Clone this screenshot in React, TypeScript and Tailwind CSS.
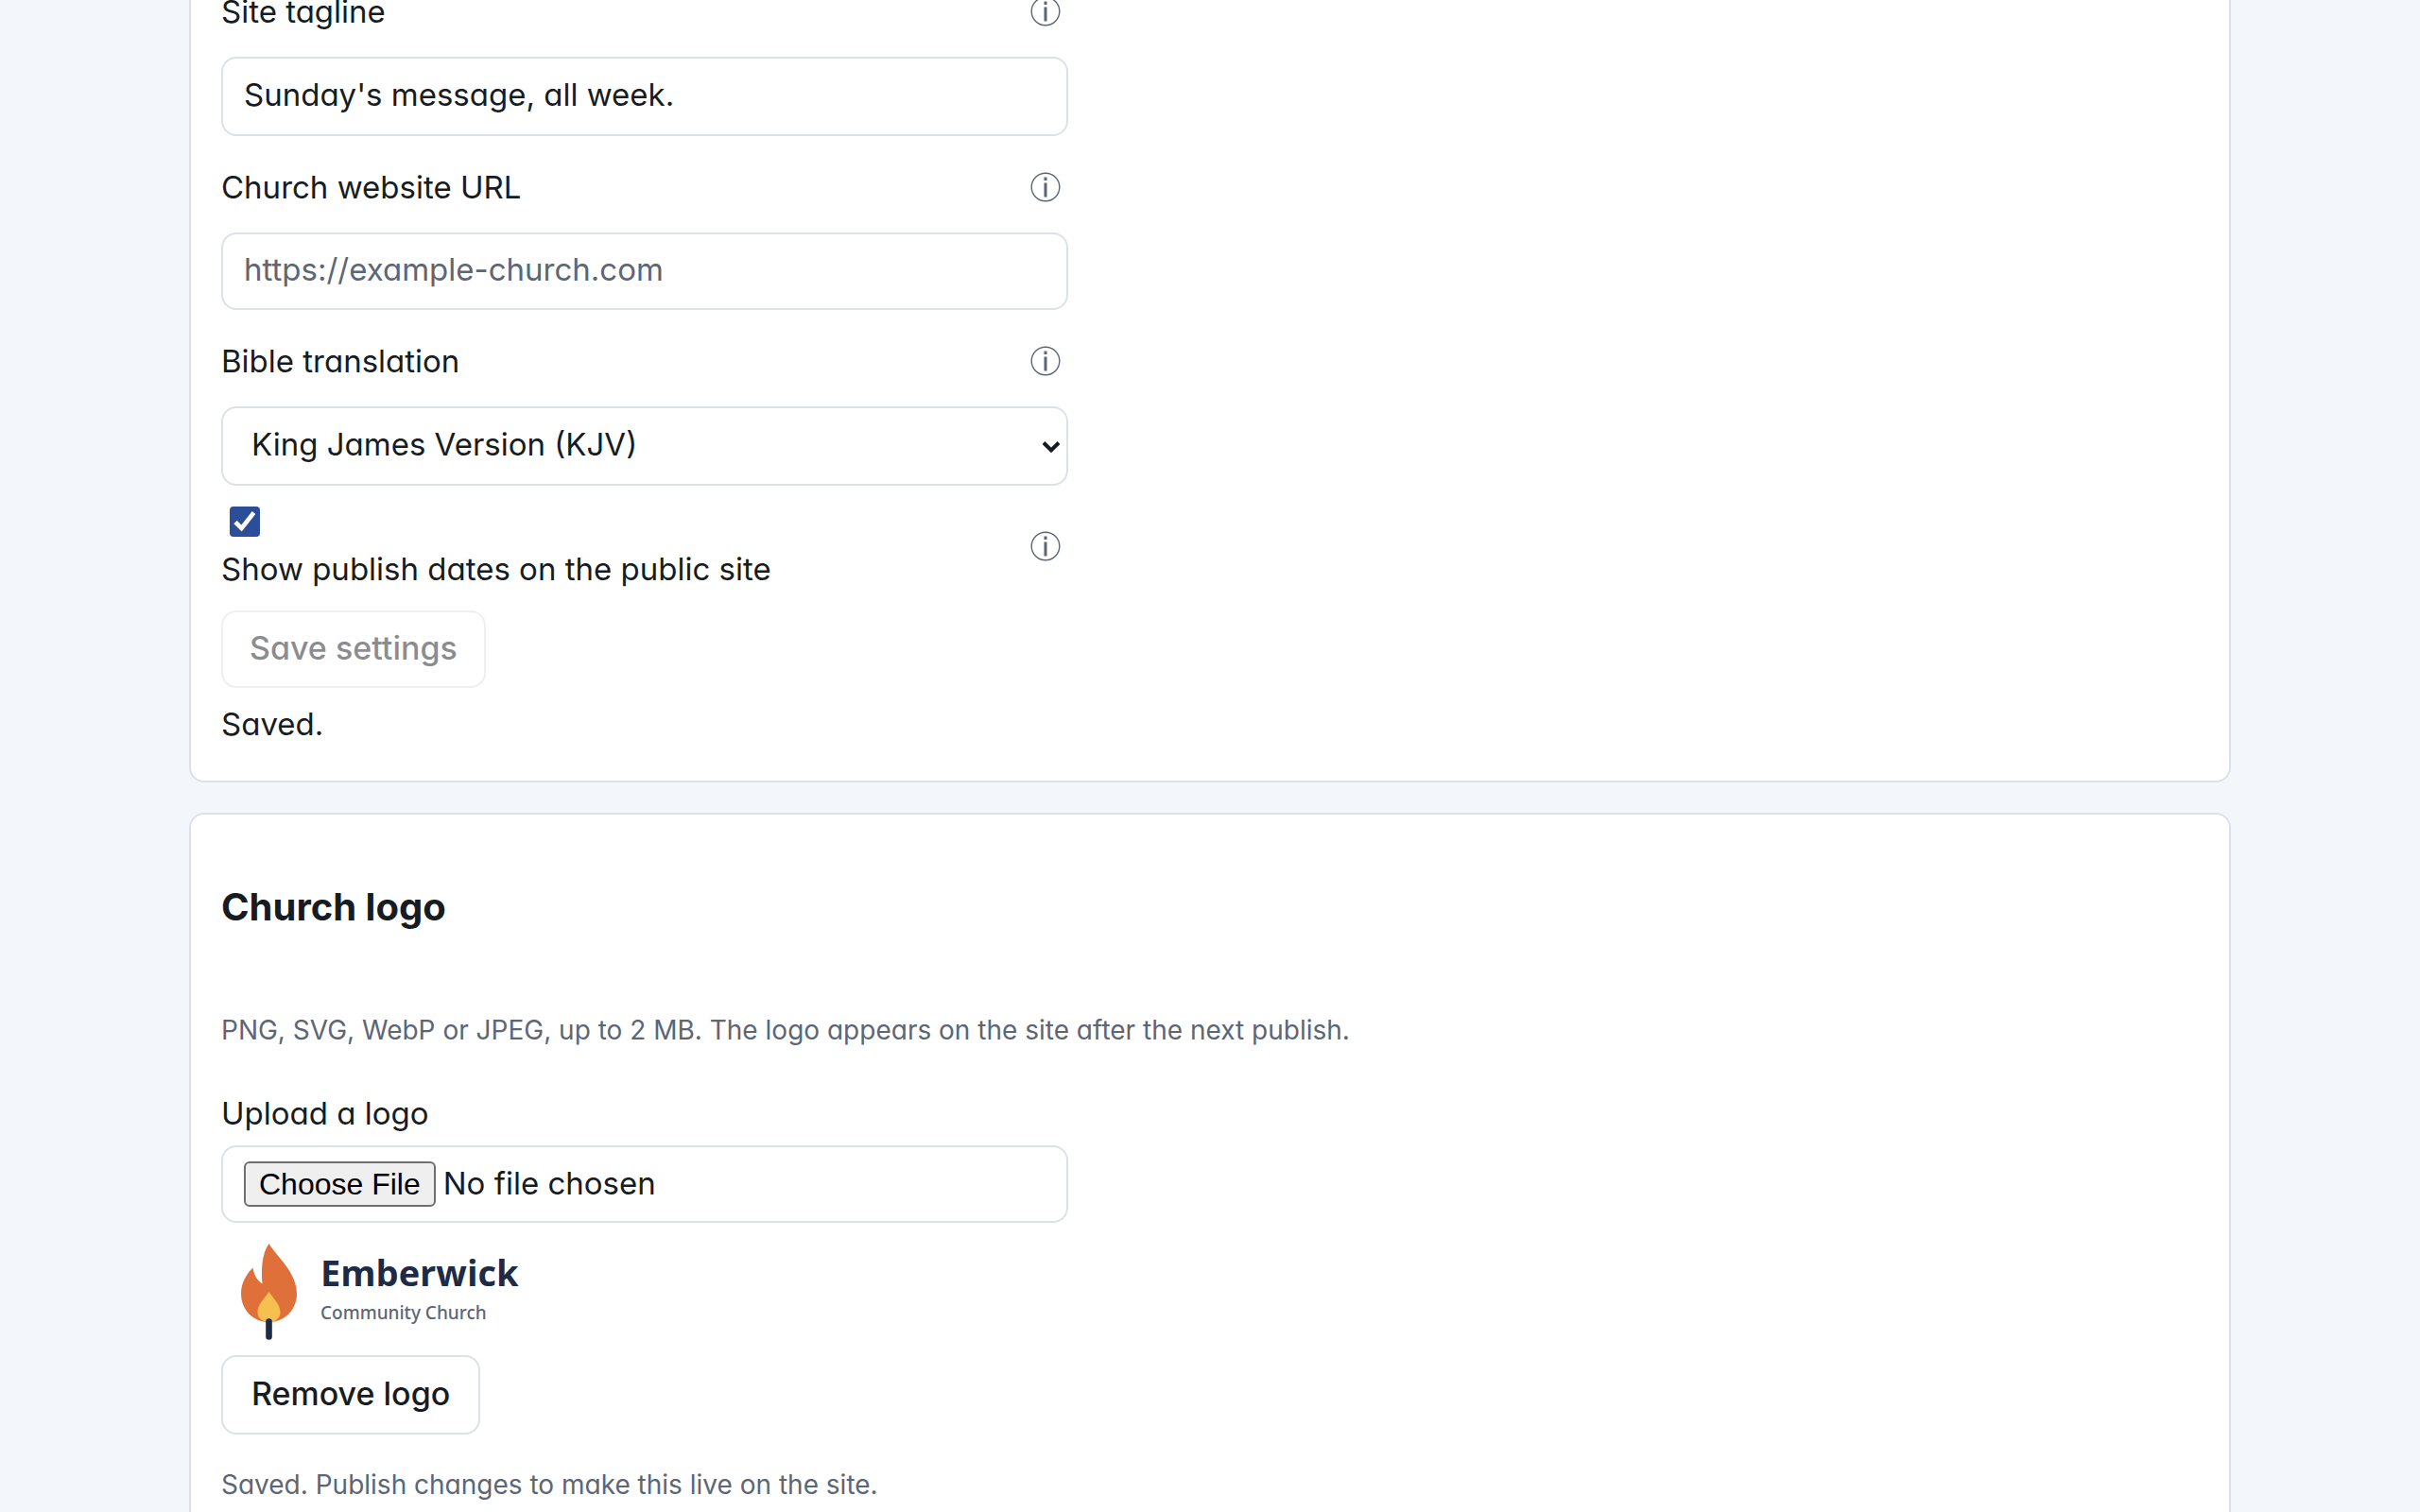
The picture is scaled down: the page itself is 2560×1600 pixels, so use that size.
import { useState } from "react";
import type { ReactNode } from "react";

const control =
  "block w-full rounded-2xl border-2 border-[#dce0e8] bg-white text-[33px] text-[#171c22] placeholder:text-[#5c6675] placeholder:opacity-100";

function InfoButton({ about }: { about: string }) {
  return (
    <button type="button" aria-label={`About ${about}`} className="mr-2 shrink-0 text-[#5c6675]">
      <svg viewBox="0 0 32 32" className="size-8" fill="none" aria-hidden="true">
        <circle cx="16" cy="16" r="14.8" stroke="currentColor" strokeWidth="1.4" />
        <path d="M14.5 5.5h3v3.4h-3zM14.5 11.5h3v15h-3z" fill="currentColor" />
      </svg>
    </button>
  );
}

function Field({ id, label, children }: { id: string; label: string; children: ReactNode }) {
  return (
    <div className="flex flex-col gap-6">
      <div className="flex h-12 items-center justify-between">
        <label htmlFor={id}>{label}</label>
        <InfoButton about={label} />
      </div>
      {children}
    </div>
  );
}

function ChurchLogo() {
  return (
    <div className="flex h-[102px] items-start gap-6 pl-[21px]">
      <svg viewBox="0 0 60 102" className="h-[102px] w-[60px]" role="img" aria-label="Flame">
        <path
          d="M29.5 0C37 13 59 30 59 53C59 70 46 83 29.5 83C13 83 0 70 0 53C0 41 6 32 12.500 25.500C13.500 33 17 39 22.500 42.500C21 27 22 11 29.500 0Z"
          fill="#df703a"
        />
        <path
          d="M29.5 51C34 58 41.500 64 41.500 72.500C41.500 79 36 83 29.500 83C23 83 17.500 79 17.500 72.500C17.500 64 25 58 29.500 51Z"
          fill="#f5c04f"
        />
        <path d="M29.500 82.500V98.500" stroke="#1e2b47" strokeWidth="6.600" strokeLinecap="round" />
      </svg>
      <div className="flex flex-col pt-1.5">
        <span className="font-['Open_Sans',sans-serif] text-[38px] leading-[48px] font-bold text-[#1e2b47]">
          Emberwick
        </span>
        <span className="font-['Noto_Sans',sans-serif] text-[19px] leading-[38px] font-medium text-[#5c6675]">
          Community Church
        </span>
      </div>
    </div>
  );
}

export default function App() {
  const [tagline, setTagline] = useState("Sunday's message, all week.");
  const [url, setUrl] = useState("");
  const [showDates, setShowDates] = useState(true);

  return (
    <main className="h-screen overflow-hidden bg-[#f3f6fa] px-8 font-[Inter,sans-serif] text-[33px] leading-[48px] text-[#171c22] [font-feature-settings:'cv11']">
      <div className="mx-auto flex max-w-[2160px] flex-col gap-8">
        <section className="-mt-12 rounded-2xl border-2 border-[#dce0e8] bg-white px-8 pt-[34px] pb-9">
          <form className="flex max-w-[896px] flex-col" onSubmit={(e) => e.preventDefault()}>
            <div className="flex flex-col gap-[30px]">
              <Field id="tagline" label="Site tagline">
                <input
                  id="tagline"
                  type="text"
                  value={tagline}
                  onChange={(e) => setTagline(e.target.value)}
                  className={`${control} h-[84px] px-[22px] pb-1`}
                />
              </Field>
              <Field id="website" label="Church website URL">
                <input
                  id="website"
                  type="url"
                  placeholder="https://example-church.com"
                  value={url}
                  onChange={(e) => setUrl(e.target.value)}
                  className={`${control} h-[82px] px-[22px] pb-1`}
                />
              </Field>
              <Field id="translation" label="Bible translation">
                <div className="relative">
                  <select id="translation" className={`${control} h-[84px] appearance-none px-[30px] pb-1`}>
                    <option>King James Version (KJV)</option>
                  </select>
                  <svg
                    viewBox="0 0 20 14"
                    className="pointer-events-none absolute top-9 right-2 h-3.5 w-5"
                    fill="none"
                    aria-hidden="true"
                  >
                    <path d="M2 2.500L10 10.500L18 2.500" stroke="#171c22" strokeWidth="4" />
                  </svg>
                </div>
              </Field>
            </div>

            <div className="mt-4 flex items-center justify-between">
              <div className="flex flex-col gap-2.5 pt-1.5">
                <span className="relative ml-[9px] size-8">
                  <input
                    id="dates"
                    type="checkbox"
                    checked={showDates}
                    onChange={(e) => setShowDates(e.target.checked)}
                    className="peer block size-8 appearance-none rounded border-2 border-[#767676] bg-white checked:border-[#2c4d97] checked:bg-[#2c4d97]"
                  />
                  <svg
                    viewBox="0 0 32 32"
                    className="pointer-events-none absolute inset-0 hidden size-8 peer-checked:block"
                    fill="none"
                    aria-hidden="true"
                  >
                    <path d="M6 16.500L12.500 23L25.500 6.500" stroke="white" strokeWidth="4.600" />
                  </svg>
                </span>
                <label htmlFor="dates">Show publish dates on the public site</label>
              </div>
              <InfoButton about="publish dates" />
            </div>

            <button
              type="submit"
              disabled
              className="mt-5 h-[82px] self-start rounded-2xl border-2 border-[#dce0e8] bg-white px-7 pb-0.5 text-[34px] font-medium opacity-50"
            >
              Save settings
            </button>
            <p role="status" className="mt-3.5">
              Saved.
            </p>
          </form>
        </section>

        <section className="rounded-2xl border-2 border-[#dce0e8] bg-white px-8 pt-[74px] pb-16">
          <h2 className="text-[40px] font-bold">Church logo</h2>
          <p className="mt-[82px] text-[28px] text-[#5c6675]">
            PNG, SVG, WebP or JPEG, up to 2 MB. The logo appears on the site after the next publish.
          </p>
          <div className="mt-10 flex max-w-[896px] flex-col">
            <label htmlFor="logo">Upload a logo</label>
            <input
              id="logo"
              type="file"
              accept="image/*"
              className={`${control} mt-2.5 h-[82px] px-[22px] py-3.5 file:mr-2 file:h-12 file:rounded-md file:border-2 file:border-solid file:border-[#6f6f6f] file:bg-[#efefef] file:px-3.5 file:font-['Liberation_Sans',sans-serif] file:text-[32px] file:leading-[40px] file:text-black`}
            />
          </div>
          <div className="mt-[22px]">
            <ChurchLogo />
          </div>
          <button
            type="button"
            className="mt-4 block h-[84px] rounded-2xl border-2 border-[#dce0e8] bg-white px-[30px] pb-0.5 text-[34px] font-medium"
          >
            Remove logo
          </button>
          <p role="status" className="mt-[29px] text-[28px] text-[#5c6675]">
            Saved. Publish changes to make this live on the site.
          </p>
        </section>
      </div>
    </main>
  );
}
